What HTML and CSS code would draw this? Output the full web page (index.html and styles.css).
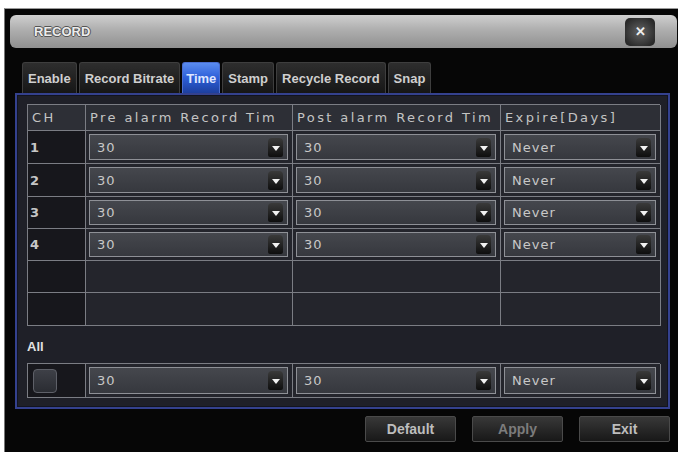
FILE: index.html
```html
<!DOCTYPE html>
<html lang="en">
<head>
    <meta charset="UTF-8">
    <title>Record</title>
    <link rel="stylesheet" href="styles.css">
</head>
<body>
    <div class="window">
        <div class="titlebar">
            <span class="title">RECORD</span>
            <span class="close">&#x2715;</span>
        </div>

        <div class="tabs">
            <span class="tab">Enable</span>
            <span class="tab">Record Bitrate</span>
            <span class="tab active">Time</span>
            <span class="tab">Stamp</span>
            <span class="tab">Recycle Record</span>
            <span class="tab">Snap</span>
        </div>

        <div class="panel">
            <div class="grid">
                <div class="cell head">CH</div>
                <div class="cell head">Pre alarm Record Tim</div>
                <div class="cell head">Post alarm Record Tim</div>
                <div class="cell head">Expire[Days]</div>

                <div class="cell ch">1</div>
                <div class="cell"><div class="select"><span>30</span><i class="arrow"></i></div></div>
                <div class="cell"><div class="select"><span>30</span><i class="arrow"></i></div></div>
                <div class="cell"><div class="select"><span>Never</span><i class="arrow"></i></div></div>

                <div class="cell ch">2</div>
                <div class="cell"><div class="select"><span>30</span><i class="arrow"></i></div></div>
                <div class="cell"><div class="select"><span>30</span><i class="arrow"></i></div></div>
                <div class="cell"><div class="select"><span>Never</span><i class="arrow"></i></div></div>

                <div class="cell ch">3</div>
                <div class="cell"><div class="select"><span>30</span><i class="arrow"></i></div></div>
                <div class="cell"><div class="select"><span>30</span><i class="arrow"></i></div></div>
                <div class="cell"><div class="select"><span>Never</span><i class="arrow"></i></div></div>

                <div class="cell ch">4</div>
                <div class="cell"><div class="select"><span>30</span><i class="arrow"></i></div></div>
                <div class="cell"><div class="select"><span>30</span><i class="arrow"></i></div></div>
                <div class="cell"><div class="select"><span>Never</span><i class="arrow"></i></div></div>

                <div class="cell ch"></div>
                <div class="cell"></div>
                <div class="cell"></div>
                <div class="cell"></div>

                <div class="cell ch"></div>
                <div class="cell"></div>
                <div class="cell"></div>
                <div class="cell"></div>
            </div>

            <div class="all-label">All</div>

            <div class="grid all-row">
                <div class="cell ch"><span class="checkbox"></span></div>
                <div class="cell"><div class="select"><span>30</span><i class="arrow"></i></div></div>
                <div class="cell"><div class="select"><span>30</span><i class="arrow"></i></div></div>
                <div class="cell"><div class="select"><span>Never</span><i class="arrow"></i></div></div>
            </div>
        </div>

        <div class="buttons">
            <span class="btn">Default</span>
            <span class="btn dim">Apply</span>
            <span class="btn">Exit</span>
        </div>
    </div>
</body>
</html>
```

FILE: styles.css
```css
body {
    margin: 0;
    background-color: #ffffff;
    font-family: "Liberation Sans", Arial, sans-serif;
}
.window {
    width: 674px;
    height: 444px;
    margin: 8px 0 0 4px;
    background-color: #060606;
    border-top: 1px solid #9a9a9a;
    border-left: 1px solid #777;
    box-sizing: border-box;
    overflow: hidden;
}
.titlebar {
    display: flex;
    align-items: center;
    justify-content: space-between;
    height: 33px;
    margin: 6px 1px 0 5px;
    padding: 0 20px 0 24px;
    border-radius: 6px;
    background: linear-gradient(#cfcfcf, #aeaeae 45%, #909090);
    box-sizing: border-box;
}
.title {
    font-size: 13px;
    font-weight: bold;
    color: #ececec;
    text-shadow: -1px 0 0 #555, 1px 0 0 #555, 0 -1px 0 #555, 0 1px 0 #555;
}
.close {
    width: 30px;
    height: 28px;
    margin-right: 2px;
    border-radius: 5px;
    background: radial-gradient(#555 20%, #2a2a2a 80%);
    color: #eeeeee;
    font-size: 13px;
    font-weight: bold;
    display: flex;
    align-items: center;
    justify-content: center;
}
.tabs {
    display: flex;
    gap: 2px;
    margin-top: 14px;
    padding-left: 17px;
    height: 31px;
}
.tab {
    display: flex;
    align-items: center;
    padding: 0 5px;
    font-size: 13px;
    font-weight: bold;
    color: #cfcfcf;
    background: linear-gradient(#2e2e2e, #161616);
    border: 1px solid #3e3e3e;
    border-bottom: none;
    border-radius: 3px 3px 0 0;
}
.tab.active {
    padding: 0 3px;
    color: #dfe6ff;
    background: linear-gradient(#5a8cf0, #2c5ed8 50%, #1d3f9e);
    border-color: #4a6ed0;
}
.panel {
    width: 655px;
    height: 316px;
    margin-left: 10px;
    padding: 9px 0 0 10px;
    background-color: #1f2028;
    border: 2px solid #34418e;
    box-shadow: inset 0 0 0 1px #121420;
    box-sizing: border-box;
}
.grid {
    display: grid;
    grid-template-columns: 58px 207px 208px 160px;
    grid-template-rows: 26px 33px 33px 32px 32px 32px 33px;
    width: 633px;
    border-top: 1px solid #7b7d84;
    border-left: 1px solid #7b7d84;
    box-sizing: border-box;
}
.cell {
    border-right: 1px solid #7b7d84;
    border-bottom: 1px solid #7b7d84;
    padding: 3px 4px 3px 3px;
    display: flex;
    align-items: center;
    background-color: #24252c;
    box-sizing: border-box;
    font-family: "DejaVu Sans", Verdana, sans-serif;
    font-size: 13px;
    color: #c6c6c6;
}
.cell.head {
    background-color: #2d2f36;
    padding-left: 4px;
    letter-spacing: 2.4px;
    white-space: nowrap;
    overflow: hidden;
    color: #c4c4c4;
}
.cell.ch {
    background-color: #17171c;
    font-weight: bold;
    padding-left: 2px;
}
.select {
    flex: 1;
    align-self: stretch;
    display: flex;
    align-items: center;
    justify-content: space-between;
    padding: 0 4px 0 7px;
    background: linear-gradient(#45474d, #36383e);
    border: 1px solid #8e9096;
    letter-spacing: 1px;
    color: #c8c8c8;
}
.arrow {
    position: relative;
    width: 15px;
    height: 19px;
    border-radius: 4px 4px 2px 2px;
    background: linear-gradient(#3a3a3a, #0e0e0e);
}
.arrow::after {
    content: "";
    position: absolute;
    left: 4px;
    top: 8px;
    border-left: 4px solid transparent;
    border-right: 4px solid transparent;
    border-top: 5px solid #f2f2f2;
}
.all-label {
    margin: 11px 0 6px;
    line-height: 20px;
    font-size: 13px;
    font-weight: bold;
    color: #e2e2e2;
}
.grid.all-row {
    grid-template-rows: 34px;
}
.checkbox {
    width: 22px;
    height: 22px;
    margin-left: 3px;
    border-radius: 4px;
    border: 1px solid #5e6068;
    background: linear-gradient(#3e4047, #2a2c32);
}
.buttons {
    display: flex;
    justify-content: flex-end;
    gap: 16px;
    margin-top: 7px;
    padding-right: 8px;
}
.btn {
    width: 91px;
    height: 26px;
    display: flex;
    align-items: center;
    justify-content: center;
    font-size: 14px;
    font-weight: bold;
    color: #bdbdbd;
    background: linear-gradient(#383838, #181818);
    border: 1px solid #4a4a4a;
    border-radius: 2px;
    box-sizing: border-box;
}
.btn.dim {
    color: #7c7c7c;
}
```
